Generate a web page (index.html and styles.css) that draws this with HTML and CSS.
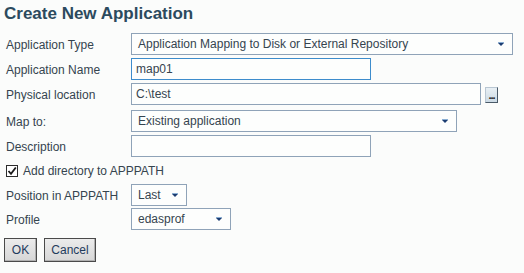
FILE: index.html
```html
<!DOCTYPE html>
<html lang="en">
<head>
  <meta charset="UTF-8">
  <title>Create New Application</title>
  <link rel="stylesheet" href="styles.css">
</head>
<body>

<div id="dialog">
  <h1 class="title">Create New Application</h1>

  <div class="row">
    <label class="label">Application Type</label>
    <div class="select w-type">
      <span>Application Mapping to Disk or External Repository</span>
      <svg class="arrow" width="6" height="4" viewBox="0 0 6 4"><rect x="0" y="0" width="6" height="1" fill="#8aaed3"/><path d="M0 1 H6 L3 4 Z" fill="#1c3d72"/></svg>
    </div>
  </div>

  <div class="row">
    <label class="label">Application Name</label>
    <input class="input w-short focused" type="text" value="map01">
  </div>

  <div class="row row-loose">
    <label class="label">Physical location</label>
    <input class="input w-path" type="text" value="C:\test">
    <button class="browse" type="button">...</button>
  </div>

  <div class="row">
    <label class="label">Map to:</label>
    <div class="select w-map">
      <span>Existing application</span>
      <svg class="arrow" width="6" height="4" viewBox="0 0 6 4"><rect x="0" y="0" width="6" height="1" fill="#8aaed3"/><path d="M0 1 H6 L3 4 Z" fill="#1c3d72"/></svg>
    </div>
  </div>

  <div class="row">
    <label class="label">Description</label>
    <input class="input w-short" type="text" value="">
  </div>

  <div class="row row-check">
    <span class="checkbox">
      <svg width="10" height="10" viewBox="0 0 10 10"><path d="M1.5 5 L4 7.8 L8.8 1.5" fill="none" stroke="#1a1a1a" stroke-width="1.8"/></svg>
    </span>
    <span>Add directory to APPPATH</span>
  </div>

  <div class="row row-tight">
    <label class="label">Position in APPPATH</label>
    <div class="select w-pos">
      <span>Last</span>
      <svg class="arrow" width="6" height="4" viewBox="0 0 6 4"><rect x="0" y="0" width="6" height="1" fill="#8aaed3"/><path d="M0 1 H6 L3 4 Z" fill="#1c3d72"/></svg>
    </div>
  </div>

  <div class="row row-last">
    <label class="label">Profile</label>
    <div class="select w-profile">
      <span>edasprof</span>
      <svg class="arrow" width="6" height="4" viewBox="0 0 6 4"><rect x="0" y="0" width="6" height="1" fill="#8aaed3"/><path d="M0 1 H6 L3 4 Z" fill="#1c3d72"/></svg>
    </div>
  </div>

  <div class="actions">
    <button class="btn btn-ok" type="button">OK</button>
    <button class="btn btn-cancel" type="button">Cancel</button>
  </div>
</div>

</body>
</html>
```

FILE: styles.css
```css
* {
  box-sizing: border-box;
  margin: 0;
  padding: 0;
}

body {
  background-color: #fbfcfb;
  font-family: 'Liberation Sans', Arial, sans-serif;
  font-size: 12px;
  color: #35444f;
}

#dialog {
  padding: 4px 6px;
}

.title {
  font-size: 17px;
  line-height: 20px;
  font-weight: bold;
  color: #2c4a5e;
  margin-left: -2px;
  margin-bottom: 9px;
}

.row {
  display: flex;
  align-items: center;
  height: 22px;
  margin-bottom: 3px;
}

.row-loose {
  margin-bottom: 5px;
}

.row-check {
  height: 21px;
}

.row-tight {
  margin-bottom: 2px;
}

.row-last {
  margin-bottom: 8px;
}

.label {
  width: 125px;
  flex-shrink: 0;
  padding-top: 1px;
}

.input,
.select {
  height: 22px;
  border: 1px solid #8fa3b8;
  background-color: #fdfefd;
  font-family: inherit;
  font-size: 12px;
  color: #35444f;
}

.input {
  padding: 0 4px;
  outline: none;
}

.input.focused {
  border-color: #3d8ccc;
}

.select {
  display: flex;
  align-items: center;
  justify-content: space-between;
  padding: 0 8px 0 6px;
}

.arrow {
  flex-shrink: 0;
}

.w-type { width: 382px; }
.w-short { width: 240px; }
.w-path { width: 350px; }
.w-map { width: 326px; }
.w-pos { width: 56px; }
.w-profile { width: 100px; }

.browse {
  width: 13px;
  height: 16px;
  margin-left: 4px;
  margin-top: 2px;
  border: 1px solid #4a5a68;
  border-top-color: #b8c6d2;
  border-left-color: #b8c6d2;
  background: linear-gradient(#e8eff4, #ccdae5);
  font-family: inherit;
  font-size: 11px;
  font-weight: bold;
  line-height: 10px;
  color: #1a1a1a;
  letter-spacing: -1px;
}

.checkbox {
  display: flex;
  align-items: center;
  justify-content: center;
  width: 12px;
  height: 12px;
  margin-right: 5px;
  border: 1px solid #2c2c2c;
  background-color: #ffffff;
}

.actions {
  display: flex;
  gap: 7px;
  margin-left: -2px;
}

.btn {
  height: 24px;
  border: 1px solid #4a4a4a;
  background: linear-gradient(#ececec, #d6d6d6);
  font-family: inherit;
  font-size: 12px;
  color: #1f3b5c;
  box-shadow: inset -1px -1px 0 #b0b0b0;
}

.btn-ok { width: 33px; }
.btn-cancel { width: 52px; }
```
